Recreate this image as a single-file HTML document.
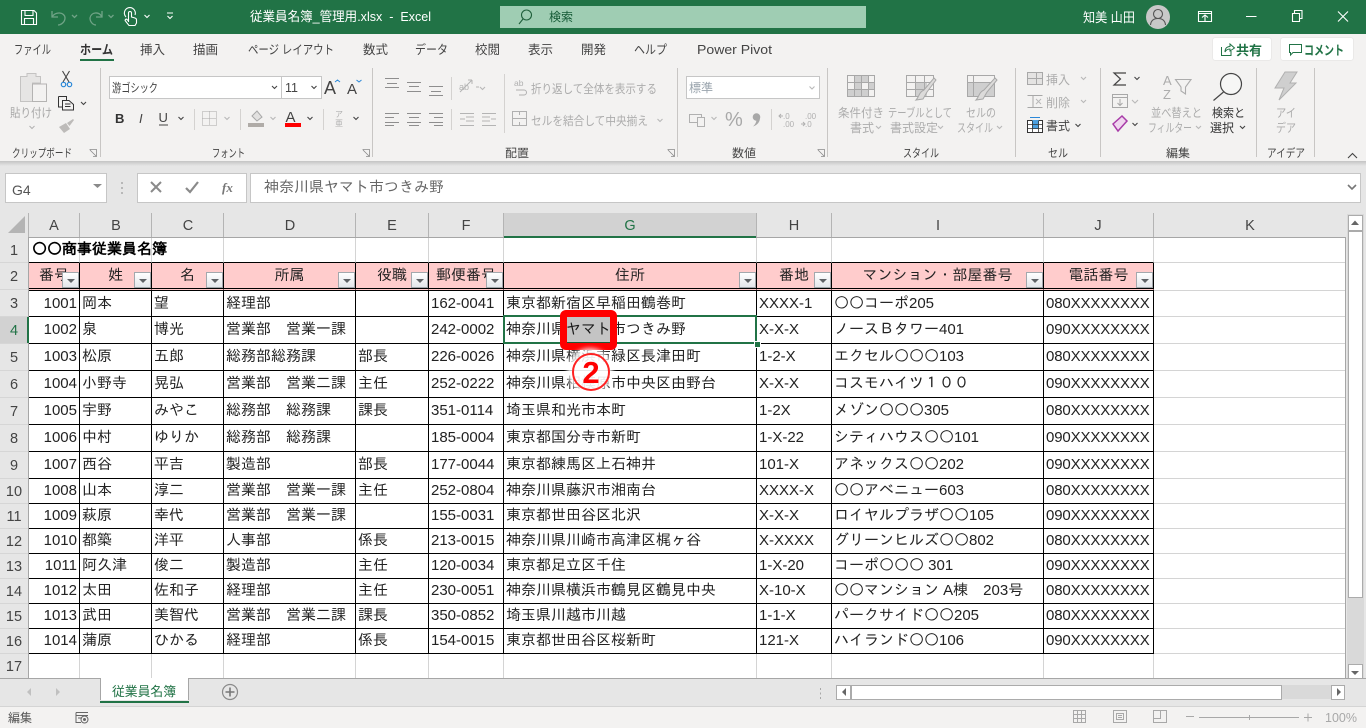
<!DOCTYPE html>
<html lang="ja"><head><meta charset="utf-8"><title>Excel</title>
<style>
html,body{margin:0;padding:0;width:1366px;height:728px;overflow:hidden;background:#e6e6e6;font-family:"Liberation Sans","Noto Sans CJK JP",sans-serif}
.a{position:absolute}
#title{left:0;top:0;width:1366px;height:34px;background:#217346}
#ribbon{left:0;top:34px;width:1366px;height:127px;background:#f3f2f1}
#shadow{left:0;top:161px;width:1366px;height:5px;background:linear-gradient(#c4c4c4,#e6e6e6)}
#rowhead{left:0;top:237px;width:28px;height:441px;background:#e6e6e6;border-right:1px solid #a6a6a6}
#sheet{left:29px;top:238px;width:1316px;height:440px;background:#fff;overflow:hidden}
table{border-collapse:separate;border-spacing:0;table-layout:fixed;width:1316px;font:15px "Liberation Sans","IPAGothic","Noto Sans CJK JP",sans-serif;color:#222}
td{box-sizing:border-box;padding:0 0 0 2px;white-space:nowrap;overflow:hidden;border-right:1px solid #000;border-bottom:1px solid #000;vertical-align:middle;line-height:20px}
td:nth-child(10){letter-spacing:-.13px}
td.k{border-right:0;border-bottom-color:#d4d4d4}
td.n{text-align:right;padding:0 2px 0 0}
tr.g td{border-right-color:#d4d4d4;border-bottom-color:#d4d4d4}
tr.t td{border-bottom-color:#000;overflow:visible;color:#000}
tr.t td.k{border-bottom-color:#d4d4d4}
tr.p td{background:#ffcccc;text-align:center;padding:0;border-bottom:3px double #000;letter-spacing:0}
tr.p td.k{background:#fff;border-bottom:1px solid #d4d4d4}
tr.e td{border-right-color:#d4d4d4;border-bottom:0}
tr.r27 td{height:27px}tr.r25 td{height:25px}
.f{position:absolute;top:272px;width:17px;height:16px;box-sizing:border-box;border:1px solid #a3a8ad;background:linear-gradient(#fff,#e3e6ea)}
.f:after{content:"";position:absolute;left:4px;top:6px;border-left:4px solid transparent;border-right:4px solid transparent;border-top:4px solid #5f6266}
</style></head><body>
<div class="a" id="title"></div>
<div class="a" id="ribbon"></div>
<div class="a" id="shadow"></div>
<div class="a" style="left:500px;top:6px;width:366px;height:22px;background:#9fcdb3"></div>
<div class="a" style="left:1213px;top:38px;width:58px;height:22px;background:#fff;border-radius:2px;box-shadow:0 0 1px #bbb"></div>
<div class="a" style="left:1281px;top:38px;width:72px;height:22px;background:#fff;border-radius:2px;box-shadow:0 0 1px #bbb"></div>
<div class="a" style="left:109px;top:76px;width:171px;height:21px;background:#fff;border:1px solid #c6c6c6"></div>
<div class="a" style="left:281px;top:76px;width:39px;height:21px;background:#fff;border:1px solid #c6c6c6"></div>
<div class="a" style="left:686px;top:76px;width:132px;height:21px;background:#fff;border:1px solid #c6c6c6"></div>
<div class="a" style="left:5px;top:173px;width:100px;height:28px;background:#fff;border:1px solid #c6c6c6"></div>
<div class="a" style="left:137px;top:173px;width:108px;height:28px;background:#fff;border:1px solid #c6c6c6"></div>
<div class="a" style="left:250px;top:173px;width:1109px;height:28px;background:#fff;border:1px solid #c6c6c6"></div>
<div class="a" style="left:504px;top:213px;width:252px;height:23px;background:#d2d2d2"></div>
<div class="a" id="rowhead"></div>
<div class="a" style="left:0;top:317px;width:27px;height:26px;background:#d2d2d2"></div>
<div class="a" id="sheet">
<table>
<colgroup><col style="width:51px"><col style="width:72px"><col style="width:72px"><col style="width:132px"><col style="width:73px"><col style="width:75px"><col style="width:253px"><col style="width:75px"><col style="width:212px"><col style="width:110px"><col style="width:191px"></colgroup>
<tr class="g t r25"><td style="font-weight:bold;padding-left:3px">〇〇商事従業員名簿</td><td></td><td></td><td></td><td></td><td></td><td></td><td></td><td></td><td></td><td class="k"></td></tr>
<tr class="p" style="height:28px"><td style="height:28px">番号</td><td>姓</td><td>名</td><td>所属</td><td>役職</td><td>郵便番号</td><td>住所</td><td>番地</td><td>マンション・部屋番号</td><td>電話番号</td><td class="k"></td></tr>
<tr><td class="n" style="height:26px">1001</td><td>岡本</td><td>望</td><td>経理部</td><td></td><td>162-0041</td><td>東京都新宿区早稲田鶴巻町</td><td>XXXX-1</td><td>〇〇コーポ205</td><td>080XXXXXXXX</td><td class="k"></td></tr>
<tr class="r27"><td class="n">1002</td><td>泉</td><td>博光</td><td>営業部　営業一課</td><td></td><td>242-0002</td><td>神奈川県ヤマト市つきみ野</td><td>X-X-X</td><td>ノースＢタワー401</td><td>090XXXXXXXX</td><td class="k"></td></tr>
<tr class="r27"><td class="n">1003</td><td>松原</td><td>五郎</td><td>総務部総務課</td><td>部長</td><td>226-0026</td><td>神奈川県横浜市緑区長津田町</td><td>1-2-X</td><td>エクセル〇〇〇103</td><td>080XXXXXXXX</td><td class="k"></td></tr>
<tr class="r27"><td class="n">1004</td><td>小野寺</td><td>晃弘</td><td>営業部　営業二課</td><td>主任</td><td>252-0222</td><td>神奈川県相模原市中央区由野台</td><td>X-X-X</td><td>コスモハイツ１００</td><td>090XXXXXXXX</td><td class="k"></td></tr>
<tr class="r27"><td class="n">1005</td><td>宇野</td><td>みやこ</td><td>総務部　総務課</td><td>課長</td><td>351-0114</td><td>埼玉県和光市本町</td><td>1-2X</td><td>メゾン〇〇〇305</td><td>080XXXXXXXX</td><td class="k"></td></tr>
<tr class="r27"><td class="n">1006</td><td>中村</td><td>ゆりか</td><td>総務部　総務課</td><td></td><td>185-0004</td><td>東京都国分寺市新町</td><td>1-X-22</td><td>シティハウス〇〇101</td><td>090XXXXXXXX</td><td class="k"></td></tr>
<tr class="r27"><td class="n">1007</td><td>西谷</td><td>平吉</td><td>製造部</td><td>部長</td><td>177-0044</td><td>東京都練馬区上石神井</td><td>101-X</td><td>アネックス〇〇202</td><td>090XXXXXXXX</td><td class="k"></td></tr>
<tr class="r25"><td class="n">1008</td><td>山本</td><td>淳二</td><td>営業部　営業一課</td><td>主任</td><td>252-0804</td><td>神奈川県藤沢市湘南台</td><td>XXXX-X</td><td>〇〇アベニュー603</td><td>080XXXXXXXX</td><td class="k"></td></tr>
<tr class="r25"><td class="n">1009</td><td>萩原</td><td>幸代</td><td>営業部　営業一課</td><td></td><td>155-0031</td><td>東京都世田谷区北沢</td><td>X-X-X</td><td>ロイヤルプラザ〇〇105</td><td>090XXXXXXXX</td><td class="k"></td></tr>
<tr class="r25"><td class="n">1010</td><td>都築</td><td>洋平</td><td>人事部</td><td>係長</td><td>213-0015</td><td>神奈川県川崎市高津区梶ヶ谷</td><td>X-XXXX</td><td>グリーンヒルズ〇〇802</td><td>080XXXXXXXX</td><td class="k"></td></tr>
<tr class="r25"><td class="n">1011</td><td>阿久津</td><td>俊二</td><td>製造部</td><td>主任</td><td>120-0034</td><td>東京都足立区千住</td><td>1-X-20</td><td>コーポ〇〇〇 301</td><td>090XXXXXXXX</td><td class="k"></td></tr>
<tr class="r25"><td class="n">1012</td><td>太田</td><td>佐和子</td><td>経理部</td><td>主任</td><td>230-0051</td><td>神奈川県横浜市鶴見区鶴見中央</td><td>X-10-X</td><td>〇〇マンション A棟　203号</td><td>080XXXXXXXX</td><td class="k"></td></tr>
<tr class="r25"><td class="n">1013</td><td>武田</td><td>美智代</td><td>営業部　営業二課</td><td>課長</td><td>350-0852</td><td>埼玉県川越市川越</td><td>1-1-X</td><td>パークサイド〇〇205</td><td>080XXXXXXXX</td><td class="k"></td></tr>
<tr class="r25"><td class="n">1014</td><td>蒲原</td><td>ひかる</td><td>経理部</td><td>係長</td><td>154-0015</td><td>東京都世田谷区桜新町</td><td>121-X</td><td>ハイランド〇〇106</td><td>090XXXXXXXX</td><td class="k"></td></tr>
<tr class="e r25"><td></td><td></td><td></td><td></td><td></td><td></td><td></td><td></td><td></td><td></td><td class="k"></td></tr>
</table>
</div>
<div class="a" style="left:1345px;top:237px;width:1px;height:441px;background:#a6a6a6"></div>
<div class="a" style="left:29px;top:237px;width:1316px;height:1px;background:#a6a6a6"></div>
<div class="f" style="left:62px"></div><div class="f" style="left:134px"></div><div class="f" style="left:206px"></div><div class="f" style="left:338px"></div><div class="f" style="left:411px"></div><div class="f" style="left:486px"></div><div class="f" style="left:739px"></div><div class="f" style="left:814px"></div><div class="f" style="left:1026px"></div><div class="f" style="left:1136px"></div>
<!-- selection -->
<div class="a" style="left:503px;top:315px;width:254px;height:29px;box-sizing:border-box;border:2px solid #217346"></div>
<div class="a" style="left:754px;top:341px;width:5px;height:5px;background:#217346;border:1px solid #fff;box-sizing:content-box"></div>
<div class="a" style="left:27px;top:317px;width:2px;height:26px;background:#217346"></div>
<div class="a" style="left:504px;top:236px;width:252px;height:2px;background:#217346"></div>
<!-- scrollbars -->
<div class="a" style="left:1347px;top:214px;width:17px;height:465px;background:#d9d9d9"></div>
<div class="a" style="left:1348px;top:231px;width:13px;height:365px;background:#fff;border:1px solid #ababab"></div>
<div class="a" style="left:1348px;top:215px;width:13px;height:14px;background:#fff;border:1px solid #ababab"></div>
<div class="a" style="left:1348px;top:664px;width:13px;height:13px;background:#fff;border:1px solid #ababab"></div>
<div class="a" style="left:0;top:678px;width:1366px;height:1px;background:#a6a6a6"></div>
<div class="a" style="left:100px;top:678px;width:87px;height:22px;background:#fff;border-left:1px solid #a6a6a6;border-right:1px solid #a6a6a6"></div>
<div class="a" style="left:100px;top:701px;width:89px;height:2px;background:#217346"></div>
<div class="a" style="left:836px;top:685px;width:509px;height:14px;background:#d9d9d9"></div>
<div class="a" style="left:836px;top:685px;width:13px;height:13px;background:#fff;border:1px solid #ababab"></div>
<div class="a" style="left:851px;top:685px;width:429px;height:13px;background:#fff;border:1px solid #ababab"></div>
<div class="a" style="left:1331px;top:685px;width:12px;height:13px;background:#fff;border:1px solid #ababab"></div>
<div class="a" style="left:0;top:706px;width:1366px;height:22px;background:#f3f2f1;border-top:1px solid #d4d4d4;box-sizing:border-box"></div>

<svg class="a" style="left:0;top:0" width="1366" height="728" viewBox="0 0 1366 728" font-family="'Liberation Sans','Noto Sans CJK JP',sans-serif">
<!-- title bar icons -->
<g fill="none" stroke="#fff" stroke-width="1.1">
<path d="M21.5 10.5H34L36.5 13V24.5H21.5ZM25 10.5V15.5H33V10.5M24.5 24.5V18.5H33.5V24.5"/>
<path d="M126 17A5.5 5.5 0 1 1 135 15M128.5 22V13A1.5 1.5 0 0 1 131.5 13V17L135 18A2 2 0 0 1 136.5 20V23L135 25.5H129L125.5 21A1 1 0 0 1 127 19.5L128.5 21"/>
<path d="M144.5 15L147 17.5L149.5 15M167 13H173M167.5 16L170 18.5L172.5 16"/>
<path d="M1198.5 11.5H1211.500V21.5H1198.5ZM1198.5 13.500H1211.500M1202 17.500L1205 15L1208 17.500M1205 15.500V21"/>
<path d="M1246 16.5H1256.5M1292.500 13.5H1299.500V21.5H1292.500ZM1294.500 13.5V10.5H1302V18.5H1299.500M1338 11.5L1348 21.5M1348 11.5L1338 21.5"/>
</g>
<g fill="none" stroke="#6fa386" stroke-width="1.3">
<path d="M52 11V17H58M52 17C55 11 65 12 65 18C65 22 61 25 58 25M72 15L74.5 17.5L77 15"/>
<path d="M102 11V17H96M102 17C99 11 91 12 90 18C90 22 93 25 96 25M108.5 15L111 17.5L113.500 15"/>
</g>
<circle cx="526.500" cy="15" r="5" fill="none" stroke="#1f5f3b" stroke-width="1.100"/><path d="M523 19L519 24" stroke="#1f5f3b" stroke-width="1.100"/>
<circle cx="1158" cy="17" r="12" fill="#c8c8c8"/>
<circle cx="1158" cy="14" r="4.500" fill="none" stroke="#555" stroke-width="1.100"/><path d="M1150.500 25C1151 20 1154 18.500 1158 18.500C1162 18.500 1165 20 1165.500 25" fill="none" stroke="#555" stroke-width="1.100"/>
<g fill="#fff" font-size="13">
<text x="250" y="21" textLength="181" lengthAdjust="spacingAndGlyphs" xml:space="preserve">従業員名簿_管理用.xlsx  -  Excel</text>
<text x="1083" y="22" textLength="52" lengthAdjust="spacingAndGlyphs" xml:space="preserve">知美 山田</text>
</g>
<text x="549" y="21" font-size="12" fill="#155a36">検索</text>
<!-- tabs -->
<g font-size="12.500" fill="#444">
<text x="14" y="54" textLength="37" lengthAdjust="spacingAndGlyphs">ファイル</text>
<text x="80" y="54" textLength="33" lengthAdjust="spacingAndGlyphs" font-weight="bold" fill="#333">ホーム</text>
<text x="140" y="54">挿入</text><text x="193" y="54">描画</text>
<text x="248" y="54" textLength="86" lengthAdjust="spacingAndGlyphs">ページ レイアウト</text>
<text x="363" y="54">数式</text>
<text x="415" y="54" textLength="33" lengthAdjust="spacingAndGlyphs">データ</text>
<text x="475" y="54">校閲</text><text x="528" y="54">表示</text><text x="581" y="54">開発</text>
<text x="634" y="54" textLength="33" lengthAdjust="spacingAndGlyphs">ヘルプ</text>
<text x="697" y="54" textLength="75" lengthAdjust="spacingAndGlyphs">Power Pivot</text>
</g>
<rect x="80" y="59" width="34" height="2" fill="#217346"/>
<g font-size="13" font-weight="bold" fill="#217346">
<text x="1236" y="55">共有</text>
<text x="1304" y="55" textLength="40" lengthAdjust="spacingAndGlyphs">コメント</text>
</g>
<path d="M1221.500 47V55.500H1231V51M1225 52C1225 47.500 1228 46.500 1230 46.500V44L1234.500 48L1230 51V49C1228 49 1226 50 1225 52Z" fill="none" stroke="#217346"/>
<path d="M1289.500 44.500H1301.500V52.500H1293L1290.500 55V52.500H1289.500Z" fill="none" stroke="#217346"/>
<!-- group separators -->
<path d="M100.500 68V157M372.500 68V157M677.500 68V157M827.500 68V157M1015.500 68V157M1100.500 68V157M1256.500 68V157M1314.500 68V157" stroke="#c8c6c4"/>
<path d="M194.500 109V130M240.500 109V130M323.500 109V130M451.500 77V100M451.500 109V130M504.500 74V133M771.500 109V130" stroke="#d4d2d0"/>
<!-- group labels -->
<g font-size="11.500" fill="#444">
<text x="12" y="157" textLength="60" lengthAdjust="spacingAndGlyphs">クリップボード</text>
<text x="212" y="157" textLength="33" lengthAdjust="spacingAndGlyphs">フォント</text>
<text x="505" y="157" textLength="24" lengthAdjust="spacingAndGlyphs">配置</text>
<text x="732" y="157" textLength="24" lengthAdjust="spacingAndGlyphs">数値</text>
<text x="903" y="157" textLength="36" lengthAdjust="spacingAndGlyphs">スタイル</text>
<text x="1048" y="157" textLength="20" lengthAdjust="spacingAndGlyphs">セル</text>
<text x="1166" y="157" textLength="24" lengthAdjust="spacingAndGlyphs">編集</text>
<text x="1267" y="157" textLength="38" lengthAdjust="spacingAndGlyphs">アイデア</text>
</g>
<path d="M89.500 149.500H96.500V156.500M90 150L96 156M93 156.500H96.500V153M362.500 149.500H369.500V156.500M363 150L369 156M366 156.500H369.500V153M667.500 149.500H674.500V156.500M668 150L674 156M671 156.500H674.500V153M817.500 149.500H824.500V156.500M818 150L824 156M821 156.500H824.500V153" fill="none" stroke="#8a8a8a" stroke-width="0.800"/>
<!-- clipboard -->
<path d="M20.500 76.500H27V73.500H36V76.500H40.500V83H32.500V101.500H20.500Z" fill="#e6e5e4" stroke="#c4c3c2"/>
<rect x="32.500" y="84" width="14" height="17.500" fill="#f3f2f1" stroke="#b4b3b2"/>
<text x="10" y="117" font-size="12" fill="#a8a8a8" textLength="42" lengthAdjust="spacingAndGlyphs">貼り付け</text>
<path d="M29.500 126L32 128.500L34.500 126" fill="none" stroke="#b0b0b0"/>
<path d="M62.500 71L69 82M69.500 71L63 82" stroke="#444" stroke-width="1.100" fill="none"/>
<circle cx="63.500" cy="84.500" r="2.200" fill="none" stroke="#2b88d8" stroke-width="1.200"/><circle cx="69.500" cy="84.500" r="2.200" fill="none" stroke="#2b88d8" stroke-width="1.200"/>
<path d="M58.500 96.500H66.500V100M62.500 110V100.500H69L73.500 104.500V110H62.500ZM58.500 96.500V107H62.500M65 104H70.500M65 106.500H70.500" fill="none" stroke="#333" stroke-width="1"/>
<path d="M81 102L83.500 104.500L86 102" fill="none" stroke="#444" stroke-width="1.100"/>
<path d="M59 127L66 123L70 129L64 133ZM67 123L73 119L74 120L69.500 126Z" fill="#bdbbb9"/>
<!-- font row -->
<text x="112" y="92" font-size="12" fill="#444" textLength="46" lengthAdjust="spacingAndGlyphs">游ゴシック</text>
<text x="285" y="92" font-size="12.500" fill="#444">11</text>
<path d="M272 86L274.500 88.500L277 86M311.500 86L314 88.500L316.500 86" fill="none" stroke="#444" stroke-width="1.100"/>
<text x="324" y="94" font-size="18" fill="#444">A</text><text x="347" y="94" font-size="15" fill="#444">A</text>
<path d="M335 82L337.500 80L340 82M356.500 80L359 82L361.500 80" fill="none" stroke="#2b88d8" stroke-width="1"/>
<text x="115" y="123" font-size="13" font-weight="bold" fill="#333">B</text>
<text x="139" y="123" font-size="13" font-style="italic" fill="#444">I</text>
<text x="158.500" y="122" font-size="13" fill="#444">U</text>
<path d="M159 125H168" stroke="#444"/>
<path d="M178.500 117L181 119.500L183.500 117M307.500 117L310 119.500L312.500 117M353.500 117L356 119.500L358.500 117" fill="none" stroke="#444" stroke-width="1.100"/>
<path d="M224.500 117L227 119.500L229.500 117M270.500 117L273 119.500L275.500 117" fill="none" stroke="#b8b8b8" stroke-width="1.100"/>
<path d="M202.500 111.500H216.500V125.500H202.500ZM209.500 111.500V125.500M202.500 118.500H216.500" fill="none" stroke="#a8a8a8" stroke-dasharray="1 1"/>
<path d="M252 116L257 111L262 117L257 121Z" fill="#e2e1e0" stroke="#a8a8a8"/><rect x="248" y="123" width="16" height="4" fill="#b0aca8"/>
<text x="285.500" y="122" font-size="15" fill="#444">A</text><rect x="285" y="123" width="16" height="4" fill="#f00"/>
<text x="335" y="117" font-size="8" fill="#b0b0b0">ア</text><text x="335" y="126" font-size="8" fill="#b0b0b0">亜</text>
<!-- alignment -->
<path d="M385 78.500H399M387 83.500H397M385 87.500H399M407 82.500H421M409 86.500H419M407 91.500H421M429 86.500H443M431 91.500H441M429 95.500H443M385 113.500H399M385 117.500H394M385 122.500H399M385 125.500H394M407 113.500H421M409 117.500H419M407 122.500H421M409 125.500H419M429 113.500H443M434 117.500H443M429 122.500H443M434 125.500H443" stroke="#8e8e8e"/>
<path d="M460 92L472 80M472 80H468M472 80V84M476 87L479 87" stroke="#b4b4b4" fill="none"/>
<text x="459" y="90" font-size="9" fill="#b4b4b4">ab</text>
<path d="M480 87L482.500 89.500L485 87M657.500 119L660 121.500L662.500 119" fill="none" stroke="#b8b8b8" stroke-width="1.100"/>
<path d="M460 113.500H474M466 117H474M466 121H474M460 125.500H474M460 119H465M482 113.500H496M482 117H490M482 121H490M482 125.500H496M491 119H496" stroke="#b4b4b4" fill="none"/>
<text x="514" y="86" font-size="8.500" fill="#b0b0b0">ab</text><path d="M516 90H524A2.500 2.500 0 0 1 524 95H519" fill="none" stroke="#b0b0b0"/>
<rect x="512.500" y="111.500" width="14" height="14" fill="none" stroke="#b0b0b0"/><path d="M512.500 118.500H526.500M515 118.500H524M519.500 111.500V115M519.500 122V125.500" stroke="#b0b0b0"/>
<g font-size="12" fill="#acacac">
<text x="531" y="93" textLength="126" lengthAdjust="spacingAndGlyphs">折り返して全体を表示する</text>
<text x="531" y="125" textLength="117" lengthAdjust="spacingAndGlyphs">セルを結合して中央揃え</text>
</g>
<!-- number -->
<text x="689" y="92" font-size="12" fill="#9aa4ad">標準</text>
<path d="M809.500 86.500L812 89L814.500 86.500M711.500 117L714 119.500L716.500 117" fill="none" stroke="#b8b8b8" stroke-width="1.100"/>
<rect x="689.500" y="114.500" width="12" height="8" fill="none" stroke="#b0b0b0"/><rect x="697.500" y="117.500" width="7" height="9" fill="#f3f2f1" stroke="#b0b0b0"/>
<text x="725" y="126" font-size="20" fill="#a8a8a8">%</text>
<circle cx="756.500" cy="117" r="3.800" fill="#a8a8a8"/><path d="M760 117.500C760 122 757.500 125 753 126.500C755.500 124 756.500 122 756.500 119Z" fill="#a8a8a8"/>
<text x="783" y="119" font-size="8" fill="#b0b0b0">.0</text><text x="783" y="127" font-size="8" fill="#b0b0b0">.00</text>
<text x="805" y="119" font-size="8" fill="#b0b0b0">.00</text><text x="805" y="127" font-size="8" fill="#b0b0b0">.0</text>
<path d="M779 116H783M781 114L779 116L781 118M801 124H805M803 122L805 124L803 126" fill="none" stroke="#b0b0b0"/>
<!-- styles icons -->
<rect x="847.500" y="75.500" width="27" height="21" fill="#f3f2f1" stroke="#a8a8a8"/>
<path d="M854 76H868V83H861V90H854ZM868 83H874V90H868ZM848 90H868V96H848Z" fill="#cfcfcf"/>
<path d="M847.500 82.500H874.500M847.500 89.500H874.500M854.500 75.500V96.500M861.500 75.500V96.500M868.500 75.500V96.500" stroke="#a8a8a8" fill="none"/>
<rect x="906.500" y="75.500" width="27" height="21" fill="#f3f2f1" stroke="#a8a8a8"/>
<path d="M915 83H927V96H915Z" fill="#cfcfcf"/>
<path d="M906.500 82.500H933.500M906.500 89.500H933.500M915.500 75.500V96.500M924.500 75.500V96.500" stroke="#a8a8a8" fill="none"/>
<path d="M936 80L927 92L923 99L916 100C919 97 919 92 924 90L934 78Z" fill="#dcdbda" stroke="#a8a8a8"/>
<rect x="967.500" y="75.500" width="27" height="21" fill="#f3f2f1" stroke="#a8a8a8"/>
<rect x="968" y="82" width="26" height="14" fill="#cfcfcf"/>
<path d="M967.500 82.500H994.500M973.500 75.500V96.500" stroke="#a8a8a8" fill="none"/>
<path d="M997 80L987 92L983 99L976 100C979 97 979 92 984 90L995 78Z" fill="#dcdbda" stroke="#a8a8a8"/>
<g font-size="12" fill="#acacac">
<text x="838" y="117" textLength="46" lengthAdjust="spacingAndGlyphs">条件付き</text>
<text x="850" y="132">書式</text>
<text x="888" y="117" textLength="64" lengthAdjust="spacingAndGlyphs">テーブルとして</text>
<text x="890" y="132">書式設定</text>
<text x="966" y="117" textLength="30" lengthAdjust="spacingAndGlyphs">セルの</text>
<text x="957" y="132" textLength="36" lengthAdjust="spacingAndGlyphs">スタイル</text>
<text x="1046" y="84">挿入</text>
<text x="1046" y="107">削除</text>
<text x="1151" y="117" textLength="51" lengthAdjust="spacingAndGlyphs">並べ替えと</text>
<text x="1148" y="132" textLength="44" lengthAdjust="spacingAndGlyphs">フィルター</text>
<text x="1276" y="117" textLength="20" lengthAdjust="spacingAndGlyphs">アイ</text>
<text x="1276" y="132" textLength="20" lengthAdjust="spacingAndGlyphs">デア</text>
</g>
<path d="M876 126L878.500 128.500L881 126M938 126L940.500 128.500L943 126M997 126L999.500 128.500L1002 126M1081 77L1083.500 79.500L1086 77M1081 100L1083.500 102.500L1086 100M1196 126L1198.500 128.500L1201 126M1132 100L1135 103L1138 100" fill="none" stroke="#b8b8b8" stroke-width="1.100"/>
<!-- cells icons -->
<rect x="1027.500" y="72.500" width="15" height="12" fill="#e4e3e2" stroke="#a8a8a8"/><path d="M1027.500 78.500H1042.500M1036.500 72.500V84.500" stroke="#a8a8a8"/>
<path d="M1027.500 95.500H1042.500M1027.500 107.500H1042.500M1033 95.500V107.500" stroke="#a8a8a8"/><path d="M1036 99L1041 104M1041 99L1036 104" stroke="#b8b8b8"/>
<rect x="1027.500" y="120.500" width="15" height="12" fill="#fff" stroke="#333"/><rect x="1032" y="120" width="7" height="9" fill="#4aa0e0"/><path d="M1027.500 124.500H1042.500M1027.500 128.500H1042.500M1032.500 120.500V132.500M1038.500 120.500V132.500" stroke="#333" stroke-width="0.800"/>
<path d="M1030 117.500H1040" stroke="#2b88d8"/>
<text x="1046" y="130" font-size="12" fill="#444">書式</text>
<path d="M1075.500 124L1078 126.500L1080.500 124M1134.500 77L1137 79.500L1139.500 77M1132.500 123L1135 125.500L1137.500 123M1240 126L1242.500 128.500L1245 126" fill="none" stroke="#444" stroke-width="1.100"/>
<!-- editing icons -->
<path d="M1126 73H1114L1120.500 79L1114 85H1126" fill="none" stroke="#444" stroke-width="1.200"/>
<rect x="1112.500" y="94.500" width="15" height="13" fill="none" stroke="#a8a8a8"/><path d="M1112.500 97.500H1127.500M1120 99V105M1117.500 103L1120 105.500L1122.500 103" fill="none" stroke="#a8a8a8"/>
<path d="M1113 124L1122 116L1127 121L1118 131Z" fill="#f0d6ef" stroke="#a83ba8" stroke-width="1.500"/>
<text x="1163" y="85" font-size="13" fill="#acacac">A</text><text x="1163" y="99" font-size="13" fill="#acacac">Z</text>
<path d="M1175.500 79.500H1191L1185.500 87V94L1181 91V87Z" fill="none" stroke="#acacac" stroke-width="1.100"/>
<circle cx="1231" cy="84" r="10.500" fill="#fff" fill-opacity=".3" stroke="#444" stroke-width="1.200"/><path d="M1223.500 92L1213.500 100.500" stroke="#444" stroke-width="1.200"/>
<text x="1212" y="117" font-size="12" fill="#333" textLength="33" lengthAdjust="spacingAndGlyphs">検索と</text>
<text x="1210" y="132" font-size="12" fill="#333">選択</text>
<path d="M1285 72H1297L1290 83H1296L1279 100L1284 88H1275Z" fill="#cfcfcf" stroke="#b0b0b0"/>
<path d="M1348 158L1352.500 153.500L1357 158" fill="none" stroke="#444" stroke-width="1.100"/>
<!-- formula bar -->
<text x="12" y="195" font-size="14" fill="#555">G4</text>
<path d="M93 184H102L97.500 188Z" fill="#8a8a8a"/>
<path d="M122 182V184M122 187V189M122 192V194" stroke="#a8a8a8" stroke-width="1.500"/>
<path d="M151 182L161 192M161 182L151 192" stroke="#8a8a8a" stroke-width="2"/>
<path d="M186 188L190 192L198 182" fill="none" stroke="#8a8a8a" stroke-width="2.200"/>
<text x="222" y="192" font-size="13" font-style="italic" font-weight="bold" fill="#777" font-family="'Liberation Serif',serif">fx</text>
<text x="264" y="192" font-size="15" fill="#666" font-family="'IPAGothic','Noto Sans CJK JP',sans-serif">神奈川県ヤマト市つきみ野</text>
<path d="M1348 185L1352 189L1356 185" fill="none" stroke="#777" stroke-width="1.600"/>
<!-- column headers -->
<path d="M28.500 213V237M79.500 213V237M151.500 213V237M223.500 213V237M355.500 213V237M428.500 213V237M503.500 213V237M756.500 213V237M831.500 213V237M1043.500 213V237M1153.500 213V237" stroke="#b4b4b4"/>
<path d="M25 216V233H8Z" fill="#b4b4b4"/>
<g font-size="14.500" fill="#444" text-anchor="middle">
<text x="54" y="230">A</text><text x="116" y="230">B</text><text x="188" y="230">C</text><text x="290" y="230">D</text><text x="392" y="230">E</text><text x="466" y="230">F</text><text x="630" y="230" fill="#217346">G</text><text x="794" y="230">H</text><text x="938" y="230">I</text><text x="1098" y="230">J</text><text x="1250" y="230">K</text>
</g>
<!-- row headers -->
<path d="M0 262.500H28M0 289.500H28M0 316.500H28M0 343.500H28M0 370.500H28M0 397.500H28M0 424.500H28M0 451.500H28M0 478.500H28M0 503.500H28M0 528.500H28M0 553.500H28M0 578.500H28M0 603.500H28M0 628.500H28M0 653.500H28" stroke="#d6d6d6"/>
<g font-size="14.500" fill="#444" text-anchor="middle">
<text x="14" y="255">1</text><text x="14" y="281">2</text><text x="14" y="308">3</text><text x="14" y="335" fill="#217346">4</text><text x="14" y="362">5</text><text x="14" y="389">6</text><text x="14" y="416">7</text><text x="14" y="443">8</text><text x="14" y="470">9</text><text x="14" y="496">10</text><text x="14" y="521">11</text><text x="14" y="546">12</text><text x="14" y="571">13</text><text x="14" y="596">14</text><text x="14" y="621">15</text><text x="14" y="646">16</text><text x="14" y="671">17</text>
</g>
<!-- scroll arrows -->
<path d="M1351 225L1355 220.500L1359 225ZM1351 671H1359L1355 675Z" fill="#666"/>
<path d="M1337 688V696L1341 692Z" fill="#666"/><path d="M846 688V696L842 692Z" fill="#666"/>
<!-- tabs -->
<path d="M31 688V696L27 692Z" fill="#c0c0c0"/><path d="M56 688V696L60 692Z" fill="#c0c0c0"/>
<text x="112" y="696" font-size="13" fill="#217346" textLength="64" lengthAdjust="spacingAndGlyphs">従業員名簿</text>
<circle cx="230" cy="692" r="7.500" fill="none" stroke="#8a8a8a" stroke-width="1.200"/><path d="M225.500 692H234.500M230 687.500V696.500" stroke="#777" stroke-width="1.600"/>
<path d="M820.500 688V690M820.500 692.500V694.500M820.500 697V699" stroke="#a8a8a8"/>
<!-- status bar -->
<text x="8" y="722" font-size="12" fill="#555">編集</text>
<path d="M76 712.500H88M76 712.500V722.500H81M76 715.500H88M78 718H82" fill="none" stroke="#666"/>
<circle cx="84.500" cy="719.500" r="3.500" fill="none" stroke="#666"/><circle cx="84.500" cy="719.500" r="1.500" fill="#666"/>
<path d="M1073.500 710.500H1085.500V722.500H1073.500ZM1077.500 710.500V722.500M1081.500 710.500V722.500M1073.500 714.500H1085.500M1073.500 718.500H1085.500" fill="none" stroke="#a8a8a8"/>
<path d="M1113.500 710.500H1126.500V722.500H1113.500ZM1116.500 713.500H1123.500V719.500H1116.500ZM1118 715.500H1122M1118 717.500H1122" fill="none" stroke="#a8a8a8"/>
<path d="M1153.500 710.500H1166.500V722.500H1153.500ZM1153.500 718.500H1160.500V710.500M1160.500 710.500V718.500" fill="none" stroke="#a8a8a8"/>
<path d="M1186 716.500H1194M1199 717.500H1299M1249.500 715V720M1304 717.500H1312M1308 713.500V721.500" stroke="#a8a8a8" fill="none"/>
<text x="1325" y="722" font-size="12.500" fill="#a8a8a8">100%</text>
</svg>
<!-- annotation -->
<div class="a" style="left:567px;top:317px;width:43px;height:26px;background:#c4c4c4;mix-blend-mode:multiply"></div>
<div class="a" style="left:560px;top:310px;width:57px;height:40px;box-sizing:border-box;border:7px solid #ff0000;border-radius:6px"></div>
<div class="a" style="left:569px;top:350px;width:42px;height:42px;border-radius:50%;background:rgba(255,255,255,.75);box-shadow:0 0 4px 2px rgba(255,255,255,.8)"></div>
<div class="a" style="left:572px;top:353px;width:34px;height:34px;border:2px solid #f22;border-radius:50%;background:rgba(255,255,255,.6);color:#f00;font:bold 31px/35px 'Liberation Sans',sans-serif;text-align:center">2</div>
</body></html>
